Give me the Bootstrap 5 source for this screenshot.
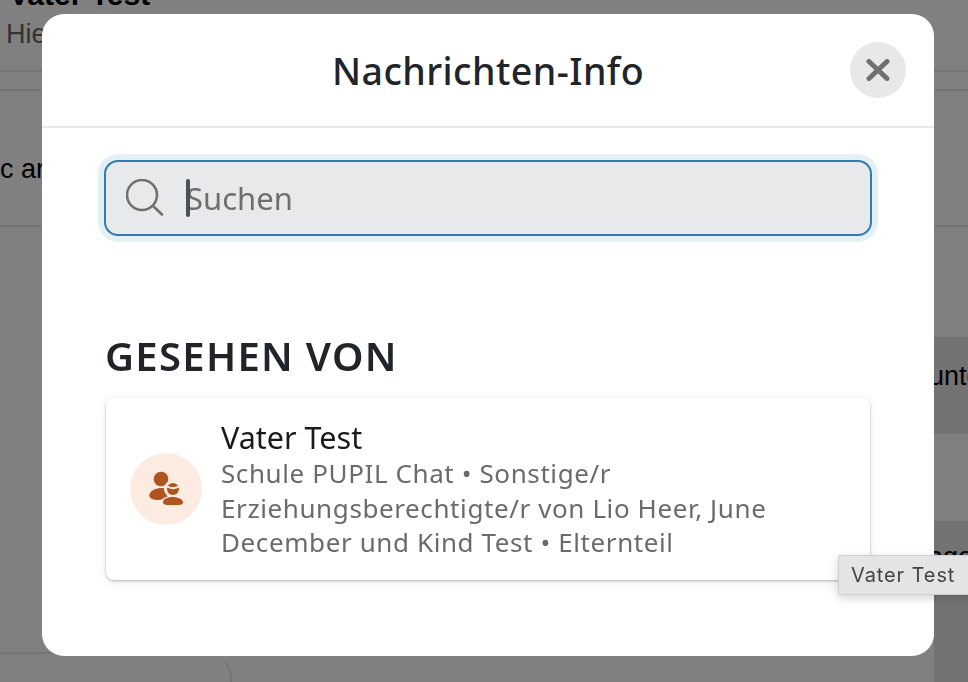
<!DOCTYPE html>
<html lang="de">
<head>
<meta charset="utf-8">
<title>Nachrichten-Info</title>
<link href="https://cdn.jsdelivr.net/npm/bootstrap@5.3.0/dist/css/bootstrap.min.css" rel="stylesheet">
<style>
html,body{height:100%;overflow:hidden}
body{background:#808080;font-family:"Noto Sans","Liberation Sans",sans-serif;color:#212529}
.pg{height:682px;overflow:hidden;position:relative;font-family:"Liberation Sans",sans-serif;color:#000}
.pg-head{height:72px;border-bottom:2px solid #757575;padding-left:6px;display:flow-root}
.pg-name{font-weight:700;font-size:30px;line-height:30px;margin-top:-20px;padding-left:3px}
.pg-sub{font-size:27px;line-height:30px;color:#333;margin-top:9px}
.pg-gap{height:19px;border-bottom:2px solid #757575}
.pg-msg{height:136px;border-bottom:2px solid #757575;font-size:27px;padding-top:60px;line-height:36px}
.pg-s1{height:110px}
.pg-dark{height:97px;width:34px;margin-left:auto;background:#737373;font-size:27px;line-height:36px;padding-top:21px;text-indent:-5px;white-space:nowrap;overflow:hidden}
.pg-s2{height:87px}
.pg-dark2{height:161px;width:34px;margin-left:auto;background:#737373;font-size:27px;line-height:36px;padding-top:18px;text-indent:-6px;white-space:nowrap;overflow:hidden}
.pg-bline{position:absolute;left:0;top:652px;width:60px;border-top:2px solid #757575}
.pg-bcard{position:absolute;left:100px;top:655px;width:132px;height:60px;border:2px solid #757575;border-left:0;border-bottom:0;border-top-right-radius:22px;border-top-color:transparent}
.info-modal{margin:14px 0 0 42px;width:892px;max-width:none;height:642px}
.info-box{height:642px;border:0;border-radius:22px;background:#fff}
.info-head{height:114px;border-bottom:2px solid #e9e9ea;padding:0;position:relative;flex-shrink:0}
.info-title{font-size:37.5px;font-weight:500;letter-spacing:.45px;color:#212529;line-height:1;margin:0;position:relative;top:1px}
.info-close{width:56px;height:56px;background:#e7e8ea;border:0;padding:0;position:absolute;right:28px;top:28px}
.info-body{padding:32px 62px 0}
.srch{height:76px;width:768px;position:relative;border:2px solid #2e7cb0;border-radius:14px;background:#e8e9eb;box-shadow:0 0 0 6px #e4f0f6}
.srch svg{margin-left:20px;flex-shrink:0}
.srch input{background:transparent;border:0;box-shadow:none;font-size:31px;padding:0;margin-left:22px;height:70px;color:#6b6b6b;caret-color:transparent}
.srch input::placeholder{color:#6e6e6e;opacity:1}
.srch input:focus{background:transparent;box-shadow:none}
.srch-caret{position:absolute;left:80px;top:17px;width:4px;height:38px;background:#495057;border-radius:2px}
.seen{font-size:40px;font-weight:600;line-height:46px;letter-spacing:1.300px;margin:97px 0 19px 1px;color:#212529}
.seen-card{width:764px;margin-left:2px;height:182px;border:0;border-radius:8px;box-shadow:0 1px 3px rgba(0,0,0,.28),0 4px 14px rgba(0,0,0,.06)}
.ava{width:72px;height:72px;background:#fcebe0;flex-shrink:0;margin-left:24px;margin-right:19px}
.pname{font-size:30.5px;line-height:38px;color:#1a1a1a;margin-top:20px}
.pinfo{font-size:26px;line-height:34.5px;color:#6b6b6b;white-space:nowrap;letter-spacing:.6px}
.tip{position:absolute;left:838px;top:555px;width:140px;height:40px;background:#e3e4e6;border:1px solid #cfcfcf;border-radius:2px;box-shadow:0 3px 10px rgba(0,0,0,.18);font-family:Inter,"Liberation Sans",sans-serif;font-size:20px;letter-spacing:.9px;line-height:38px;padding-left:12px;color:#444;z-index:2000;white-space:nowrap}
</style>
</head>
<body>
<div class="pg">
  <div class="pg-head">
    <div class="pg-name">Vater Test</div>
    <div class="pg-sub">Hier</div>
  </div>
  <div class="pg-gap"></div>
  <div class="pg-msg">c ar</div>
  <div class="pg-s1"></div>
  <div class="pg-dark">unten</div>
  <div class="pg-s2"></div>
  <div class="pg-dark2">age</div>
  <div class="pg-bline"></div>
  <div class="pg-bcard"></div>
</div>

<div class="modal d-block" tabindex="-1">
  <div class="modal-dialog info-modal">
    <div class="modal-content info-box">
      <div class="modal-header info-head justify-content-center">
        <h1 class="modal-title info-title">Nachrichten-Info</h1>
        <button type="button" class="btn rounded-circle d-flex align-items-center justify-content-center info-close" aria-label="Schließen">
          <svg width="24" height="22" viewBox="0 0 24 22"><path d="M3 2.5 21 19.5M21 2.5 3 19.5" stroke="#707070" stroke-width="5" stroke-linecap="round" fill="none"/></svg>
        </button>
      </div>
      <div class="modal-body info-body">
        <div class="srch d-flex align-items-center">
          <svg width="38" height="38" viewBox="0 0 38 38" fill="none" stroke="#707070" stroke-width="2.6" stroke-linecap="round"><circle cx="16" cy="16" r="15"/><path d="M27 27 36 35.500"/></svg>
          <input type="text" class="form-control" placeholder="Suchen" aria-label="Suchen">
          <span class="srch-caret"></span>
        </div>
        <h2 class="seen">GESEHEN VON</h2>
        <div class="card seen-card flex-row align-items-center">
          <div class="ava rounded-circle d-flex align-items-center justify-content-center">
            <svg width="36" height="36" viewBox="0 0 36 36">
              <circle cx="13" cy="8" r="7.300" fill="#b0531f"/>
              <ellipse cx="11.500" cy="23" rx="10.500" ry="5.800" transform="rotate(-10 11.500 23)" fill="#b0531f"/>
              <circle cx="25" cy="18" r="9" fill="#fcebe0"/>
              <circle cx="25" cy="18" r="6" fill="#b0531f"/>
              <path d="M19 15.500c3 1.800 8 2 12-.2" stroke="#fcebe0" stroke-width="2" fill="none"/>
              <path d="M24.500 25.500c-6 0-10.500 2.500-10.500 6 0 2 2 3 5 3h12c3 0 4.500-1 4.500-3 0-3.500-5-6-11-6z" fill="#fcebe0" stroke="#fcebe0" stroke-width="1.500"/>
              <path d="M24.500 26c-5.500 0-9.500 2.400-9.500 5.300 0 1.700 1.500 2.700 4.500 2.700h11c3 0 4.500-1 4.500-2.700 0-2.900-5-5.300-10.500-5.300z" fill="#b0531f"/>
            </svg>
          </div>
          <div class="align-self-start">
            <div class="pname">Vater Test</div>
            <div class="pinfo">Schule PUPIL Chat • Sonstige/r<br>Erziehungsberechtigte/r von Lio Heer, June<br>December und Kind Test • Elternteil</div>
          </div>
        </div>
      </div>
    </div>
  </div>
</div>
<div class="tip">Vater Test</div>
<script src="https://cdn.jsdelivr.net/npm/bootstrap@5.3.0/dist/js/bootstrap.bundle.min.js"></script>
</body>
</html>
